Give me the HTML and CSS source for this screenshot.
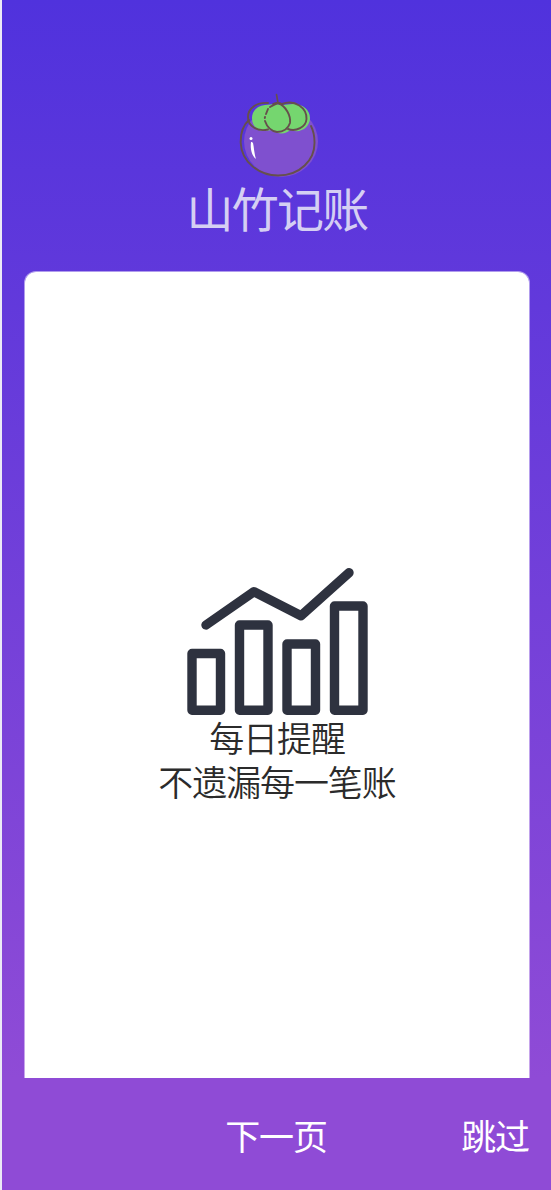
FILE: index.html
```html
<!DOCTYPE html>
<html lang="zh-CN">
<head>
<meta charset="UTF-8">
<title>山竹记账</title>
<link rel="stylesheet" href="styles.css">
</head>
<body>
<div class="page">
  <header class="header">
    <svg class="logo" viewBox="0 0 110 110" fill="none" stroke-linecap="round">
      <ellipse cx="56" cy="61.500" rx="37" ry="35.500" fill="#7f50cf"/>
      <path d="M40 25C31 26 27 32 27 38c0 8 6 14 13 13l7-1c7 5 14 4 18 0 11 4 20-3 20-12 0-8-7-14-17-14-5 0-8 1-11 1l-7-1z" fill="#75d66f"/>
      <g stroke="#66504c" stroke-width="1.900">
        <path d="M24 40C17 46 15.500 55 15.700 63C16.500 82 34 95.500 53 95.500C75 95.500 90 80 89.500 62Q89.500 53 86 46"/>
        <path d="M43 23C32 22 23 28 23 37C23 46 32 52 43 49.500"/>
        <path d="M57 24C70 19 82 28 81.500 39C81 47 71 52 63 49"/>
        <path d="M45 27Q50 24 53 23C61 26 66 36 65 43C63 49 58 52 52 52C46 51 42 47 40 41"/>
        <path d="M43 29L41 34M40 37L39.800 38"/>
        <path d="M53 23L51.500 14.500M48 24Q53 21 57 24" stroke-width="1.600"/>
      </g>
      <circle cx="26" cy="58.500" r="1.500" fill="#fff"/>
      <path d="M26 62C25 69 27 76 31 79C29 73 29 67 28 63Q27 61.500 26 62Z" fill="#fff"/>
    </svg>
    <h1 class="title">山竹记账</h1>
  </header>
  <main class="card">
    <svg class="chart" viewBox="0 0 205 165" fill="none" stroke="#2e323f" stroke-width="9.400" stroke-linecap="round" stroke-linejoin="round">
      <path d="M31 65L79 31.700L126 55.700L174 12.700"/>
      <rect x="17" y="93.500" width="28.500" height="56.700"/>
      <rect x="64.500" y="65" width="28.500" height="85.200"/>
      <rect x="112" y="84" width="28.500" height="66.200"/>
      <rect x="159.500" y="46" width="28.500" height="104.200"/>
    </svg>
    <p class="text">每日提醒<br>不遗漏每一笔账</p>
  </main>
  <footer class="actions">
    <a class="next">下一页</a>
    <a class="skip">跳过</a>
  </footer>
</div>
</body>
</html>
```
FILE: styles.css
```css
* { box-sizing: border-box; }
body {
  margin: 0;
  background: #eceaf6;
  font-family: "Liberation Sans", "Noto Sans CJK SC", sans-serif;
  font-weight: 400;
}
.page {
  height: 1190px;
  margin-left: 2px;
  display: flex;
  flex-direction: column;
  background: linear-gradient(#5032dd 0, #8f4bd6 1078px);
}
.header {
  height: 271px;
  padding-top: 80px;
  display: flex;
  flex-direction: column;
  align-items: center;
}
.logo { width: 110px; height: 110px; margin-left: 6px; flex: none; }
.title {
  margin: -10px 0 0 1px;
  font-size: 47px;
  letter-spacing: -1.800px;
  line-height: 62px;
  font-weight: 400;
  color: #d5cff3;
}
.card {
  height: 807px;
  margin: 0 21px 0 22px;
  padding-top: 288px;
  display: flex;
  flex-direction: column;
  align-items: center;
  background: #fff;
  background-clip: padding-box;
  border: 1px solid rgba(255, 255, 255, 0.5);
  border-bottom: 0;
  border-radius: 12px 12px 0 0;
}
.chart { width: 205px; height: 165px; flex: none; }
.text {
  margin: -7px 0 0;
  font-size: 35px;
  letter-spacing: -1.1px;
  line-height: 44px;
  font-weight: 350;
  color: #2b2b2b;
  text-align: center;
}
.actions {
  flex: 1;
  padding: 8px 22px 0 21px;
  display: grid;
  grid-template-columns: 1fr auto 1fr;
  align-items: center;
  font-size: 35px;
  letter-spacing: -1.1px;
  line-height: 44px;
  color: #fff;
  background: #8f4bd6;
}
.next { grid-column: 2; }
.skip { justify-self: end; }
```
